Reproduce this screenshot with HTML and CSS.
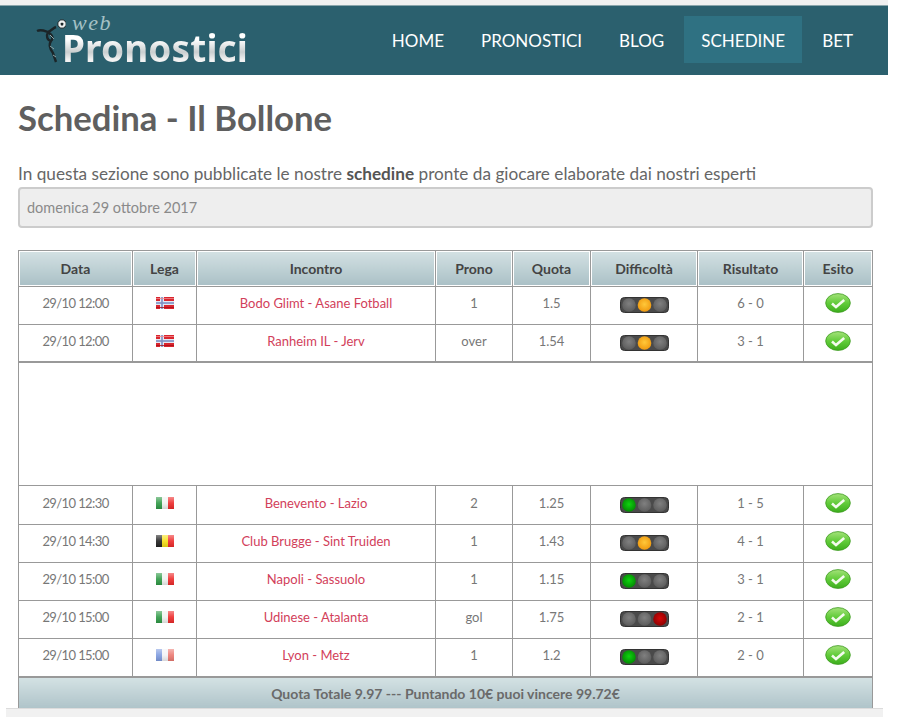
FILE: index.html
```html
<!DOCTYPE html>
<html lang="it">
<head>
<meta charset="utf-8">
<title>Schedina - Il Bollone</title>
<link rel="stylesheet" href="styles.css">
</head>
<body>
<svg class="defs" width="0" height="0" aria-hidden="true">
  <defs>
    <linearGradient id="gloss" x1="0" y1="0" x2="0" y2="1"><stop offset="0" stop-color="#fff" stop-opacity=".45"/><stop offset=".5" stop-color="#fff" stop-opacity=".1"/><stop offset="1" stop-color="#000" stop-opacity=".12"/></linearGradient>
    <radialGradient id="grey" cx=".5" cy=".4" r=".6"><stop offset="0" stop-color="#808080"/><stop offset="1" stop-color="#5c5c5c"/></radialGradient>
    <radialGradient id="amber" cx=".5" cy=".45" r=".55"><stop offset="0" stop-color="#ffc83a"/><stop offset="1" stop-color="#f09a10"/></radialGradient>
    <radialGradient id="green" cx=".5" cy=".45" r=".55"><stop offset="0" stop-color="#0fd40f"/><stop offset="1" stop-color="#048a04"/></radialGradient>
    <radialGradient id="red" cx=".5" cy=".45" r=".55"><stop offset="0" stop-color="#d80808"/><stop offset="1" stop-color="#8c0202"/></radialGradient>
    <linearGradient id="okfill" x1="0" y1="0" x2="0" y2="1"><stop offset="0" stop-color="#a4e27a"/><stop offset=".5" stop-color="#62cc3a"/><stop offset="1" stop-color="#3cae1c"/></linearGradient>
    <symbol id="ok" viewBox="0 0 26 20"><ellipse cx="13" cy="10" rx="12.3" ry="9.4" fill="url(#okfill)" stroke="#3f9a22" stroke-width=".8"/><path d="M7 10.5l4 3.6 8.2-7" fill="none" stroke="#f4fbee" stroke-width="2.6"/></symbol>
    <symbol id="no" viewBox="0 0 18 12"><rect width="18" height="12" fill="#d9252e"/><rect y="4" width="18" height="4" fill="#e4e8f2"/><rect x="4" width="4" height="12" fill="#e4e8f2"/><rect y="5.2" width="18" height="1.6" fill="#7c8fc4"/><rect x="5.2" width="1.6" height="12" fill="#7c8fc4"/><rect y="1" width="18" height=".8" fill="#f08a8f"/><rect y="10" width="18" height=".8" fill="#a81018"/></symbol>
    <symbol id="it" viewBox="0 0 18 12"><rect width="6" height="12" fill="#2f9a46"/><rect x="6" width="6" height="12" fill="#f0f2f0"/><rect x="12" width="6" height="12" fill="#ee2a2a"/><rect width="18" height="12" fill="url(#gloss)"/></symbol>
    <symbol id="be" viewBox="0 0 18 12"><rect width="6" height="12" fill="#222"/><rect x="6" width="6" height="12" fill="#f6e017"/><rect x="12" width="6" height="12" fill="#ee2a2a"/><rect width="18" height="12" fill="url(#gloss)"/></symbol>
    <symbol id="fr" viewBox="0 0 18 12"><rect width="6" height="12" fill="#7f9ce0"/><rect x="6" width="6" height="12" fill="#f2f3f6"/><rect x="12" width="6" height="12" fill="#ec7a72"/><rect width="18" height="12" fill="url(#gloss)"/></symbol>
    <symbol id="lg" viewBox="0 0 49 16"><rect x=".5" y=".5" width="48" height="15" rx="4" fill="#4a4a4a" stroke="#333"/><circle cx="9" cy="8" r="6.8" fill="url(#green)"/><circle cx="24.5" cy="8" r="6.8" fill="url(#grey)"/><circle cx="40" cy="8" r="6.8" fill="url(#grey)"/></symbol>
    <symbol id="lo" viewBox="0 0 49 16"><rect x=".5" y=".5" width="48" height="15" rx="4" fill="#4a4a4a" stroke="#333"/><circle cx="9" cy="8" r="6.8" fill="url(#grey)"/><circle cx="24.5" cy="8" r="6.8" fill="url(#amber)"/><circle cx="40" cy="8" r="6.8" fill="url(#grey)"/></symbol>
    <symbol id="lr" viewBox="0 0 49 16"><rect x=".5" y=".5" width="48" height="15" rx="4" fill="#4a4a4a" stroke="#333"/><circle cx="9" cy="8" r="6.8" fill="url(#grey)"/><circle cx="24.5" cy="8" r="6.8" fill="url(#grey)"/><circle cx="40" cy="8" r="6.8" fill="url(#red)"/></symbol>
  </defs>
</svg>
<div class="page">
  <header class="nav">
    <a class="logo" href="#">
      <svg class="logo-fig" width="30" height="46" viewBox="0 0 30 46" aria-hidden="true"><path d="M1 12c4-2 8 0 11 1 3-1 5-4 8-5M12 13c4 3 6 6 3 9-4-1-5-5-3-9M15 22c-3 4-1 8 2 12l3 9" fill="none" stroke="#1b2528" stroke-width="2.4"/><path d="M14 16l4 4M14 27l4 3M17 36l3 2" stroke="#8fa5a8" stroke-width="1"/><circle cx="26" cy="5" r="4.2" fill="#eef1f1" stroke="#1b2528"/><path d="M26 3.4l1.6 1.2-.6 1.9h-2l-.6-1.9z" fill="#1b2528"/></svg>
      <span class="logo-words">
        <span class="logo-web">web</span>
        <span class="logo-name">Pronostici</span>
      </span>
    </a>
    <nav class="menu">
      <a href="#">HOME</a>
      <a href="#">PRONOSTICI</a>
      <a href="#">BLOG</a>
      <a href="#" class="active">SCHEDINE</a>
      <a href="#">BET</a>
    </nav>
  </header>
  <main class="content">
    <h1>Schedina - Il Bollone</h1>
    <p class="intro">In questa sezione sono pubblicate le nostre <b>schedine</b> pronte da giocare elaborate dai nostri esperti</p>
    <div class="date">domenica 29 ottobre 2017</div>
    <table class="bets">
      <colgroup><col class="c1"><col class="c2"><col class="c3"><col class="c4"><col class="c5"><col class="c6"><col class="c7"><col class="c8"></colgroup>
      <thead>
        <tr><th>Data</th><th>Lega</th><th>Incontro</th><th>Prono</th><th>Quota</th><th>Difficoltà</th><th>Risultato</th><th>Esito</th></tr>
      </thead>
      <tbody>
        <tr><td class="when">29/10 12:00</td><td><svg class="flag"><use href="#no"/></svg></td><td><a href="#">Bodo Glimt - Asane Fotball</a></td><td>1</td><td>1.5</td><td><svg class="light"><use href="#lo"/></svg></td><td>6 - 0</td><td><svg class="ok"><use href="#ok"/></svg></td></tr>
        <tr class="short"><td class="when">29/10 12:00</td><td><svg class="flag"><use href="#no"/></svg></td><td><a href="#">Ranheim IL - Jerv</a></td><td>over</td><td>1.54</td><td><svg class="light"><use href="#lo"/></svg></td><td>3 - 1</td><td><svg class="ok"><use href="#ok"/></svg></td></tr>
        <tr class="ad"><td colspan="8"></td></tr>
        <tr class="tall"><td class="when">29/10 12:30</td><td><svg class="flag"><use href="#it"/></svg></td><td><a href="#">Benevento - Lazio</a></td><td>2</td><td>1.25</td><td><svg class="light"><use href="#lg"/></svg></td><td>1 - 5</td><td><svg class="ok"><use href="#ok"/></svg></td></tr>
        <tr><td class="when">29/10 14:30</td><td><svg class="flag"><use href="#be"/></svg></td><td><a href="#">Club Brugge - Sint Truiden</a></td><td>1</td><td>1.43</td><td><svg class="light"><use href="#lo"/></svg></td><td>4 - 1</td><td><svg class="ok"><use href="#ok"/></svg></td></tr>
        <tr><td class="when">29/10 15:00</td><td><svg class="flag"><use href="#it"/></svg></td><td><a href="#">Napoli - Sassuolo</a></td><td>1</td><td>1.15</td><td><svg class="light"><use href="#lg"/></svg></td><td>3 - 1</td><td><svg class="ok"><use href="#ok"/></svg></td></tr>
        <tr><td class="when">29/10 15:00</td><td><svg class="flag"><use href="#it"/></svg></td><td><a href="#">Udinese - Atalanta</a></td><td>gol</td><td>1.75</td><td><svg class="light"><use href="#lr"/></svg></td><td>2 - 1</td><td><svg class="ok"><use href="#ok"/></svg></td></tr>
        <tr><td class="when">29/10 15:00</td><td><svg class="flag"><use href="#fr"/></svg></td><td><a href="#">Lyon - Metz</a></td><td>1</td><td>1.2</td><td><svg class="light"><use href="#lg"/></svg></td><td>2 - 0</td><td><svg class="ok"><use href="#ok"/></svg></td></tr>
      </tbody>
      <tfoot>
        <tr><td colspan="8">Quota Totale 9.97 --- Puntando 10€ puoi vincere 99.72€</td></tr>
      </tfoot>
    </table>
  </main>
</div>
<div class="scrollbar"></div>
</body>
</html>
```
FILE: styles.css
```css
html, body {
  margin: 0;
  height: 726px;
  overflow: hidden;
  background: #fff;
  font-family: Lato, "Noto Sans", "Liberation Sans", sans-serif;
  color: #666;
}
.defs { position: absolute; }
.page {
  width: 888px;
  height: 708px;
  overflow: hidden;
  padding-top: 5px;
  box-sizing: border-box;
  background: linear-gradient(#f0f0f0 5px, #fff 5px);
}
.nav {
  height: 69px;
  background: #2b606e;
  border-top: 1px solid #8aa5ab;
  display: flex;
  align-items: center;
  justify-content: space-between;
}
.logo {
  display: flex;
  margin-left: 36px;
  text-decoration: none;
}
.logo-fig { margin-top: 2px; }
.logo-words {
  display: flex;
  flex-direction: column;
  margin-left: -4px;
  margin-top: -3px;
}
.logo-web {
  font: italic 22px/17px "Liberation Serif", serif;
  color: #a4c0c5;
  margin-left: 10px;
  letter-spacing: 1.5px;
}
.logo-name {
  font: 700 37px/34px "Noto Sans", sans-serif;
  letter-spacing: .1px;
  background: linear-gradient(#fff 25%, #c9cecf 62%, #f2f2f2 85%);
  -webkit-background-clip: text;
  background-clip: text;
  color: transparent;
}
.menu {
  display: flex;
  align-items: center;
  margin-right: 18px;
  margin-bottom: 2px;
}
.menu a {
  color: #fff;
  text-decoration: none;
  font-size: 17px;
  line-height: 45px;
  padding: 2px 17px 0;
  margin-left: 3px;
}
.menu a.active { background: #2f7182; }
.content { padding: 0 15px 0 18px; }
h1 {
  margin: 0;
  padding-top: 22px;
  font-size: 34.7px;
  line-height: 42px;
  font-weight: 700;
  color: #5f5f5f;
}
.intro {
  margin: 0;
  padding-top: 23px;
  font-size: 17.2px;
  line-height: 24px;
  color: #666;
}
.intro b { color: #555; }
.date {
  margin-top: 1px;
  box-sizing: border-box;
  border: 2px solid #ccc;
  border-radius: 4px;
  background: #eee;
  color: #8a8a8a;
  font-size: 14.5px;
  line-height: 37px;
  padding-left: 7px;
  width: 855px;
  height: 41px;
}
.bets {
  margin-top: 22px;
  width: 855px;
  table-layout: fixed;
  border-collapse: collapse;
  font-size: 13px;
  text-align: center;
  color: #777;
}
.c1 { width: 114px; }
.c2 { width: 64px; }
.c3 { width: 239px; }
.c4 { width: 77px; }
.c5 { width: 78px; }
.c6 { width: 107px; }
.c7 { width: 106px; }
.c8 { width: 69px; }
.bets th, .bets td {
  border: 1px solid #999;
  padding: 0 0 6px;
  height: 31px;
}
.bets th {
  padding: 0;
  height: 35px;
  font-size: 14px;
  color: #444;
  background: linear-gradient(#d3e1e3, #a9bfc5);
  box-shadow: inset 0 0 0 1px #fff;
}
.bets td.when { letter-spacing: -.6px; }
.bets td a { color: #d2405a; text-decoration: none; }
.bets svg { display: block; margin: 0 auto; }
.flag { width: 18px; height: 12px; }
.bets .light { width: 49px; height: 16px; margin-top: 4px; }
.bets .ok { width: 26px; height: 20px; }
.bets tr.short td { border-bottom-width: 2px; height: 32px; padding-bottom: 4px; }
.bets tr.ad td { height: 122px; padding: 0; }
.bets tr.tall td { height: 34px; padding-bottom: 4px; }
.bets tfoot td {
  border-top-width: 2px;
  padding: 0 0 5px;
  height: 30px;
  font-size: 14px;
  font-weight: 700;
  color: #6a6a6a;
  background: linear-gradient(#d3e1e3, #a9bfc5);
}
.scrollbar {
  position: fixed;
  left: 6px;
  top: 708px;
  width: 877px;
  height: 9px;
  background: #f1f1f1;
  border-top: 1px solid #dcdcdc;
  box-sizing: border-box;
}
```
